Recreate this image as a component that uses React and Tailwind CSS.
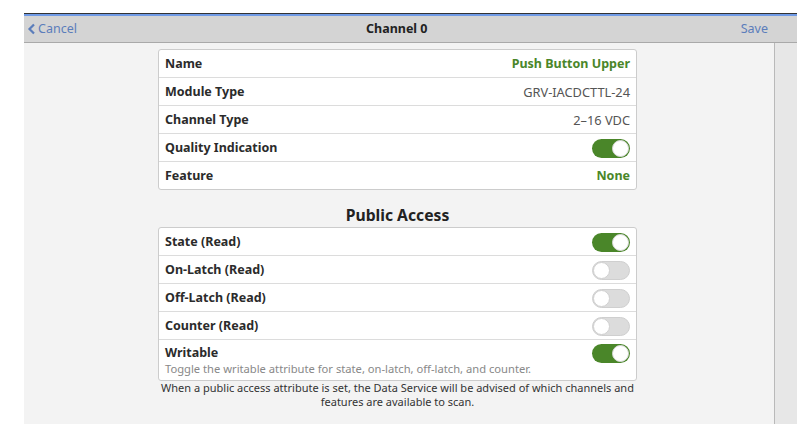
import React from "react";

const font = { fontFamily: '"Noto Sans", "Open Sans", sans-serif' };

function Toggle({ on }) {
  return on ? (
    <div className="w-[38px] h-[19px] rounded-full bg-[#4a8629] flex items-center justify-end pr-[1px]">
      <div className="w-[17px] h-[17px] rounded-full bg-white border border-[#d8d8d8]" />
    </div>
  ) : (
    <div className="w-[38px] h-[19px] rounded-full bg-[#dcdcdc] border border-[#cfcfcf] flex items-center">
      <div className="w-[17px] h-[17px] rounded-full bg-white border border-[#d0d0d0]" />
    </div>
  );
}

function Row({ label, children, last }) {
  return (
    <div className={"flex items-center justify-between px-[6px] pt-[2px] " + (last ? "h-[27px]" : "h-[28px] border-b border-[#dcdcdc]")}>
      <span className="text-[12.5px] font-bold text-[#2b2b2b]">{label}</span>
      {children}
    </div>
  );
}

export default function App() {
  return (
    <div className="w-[812px] h-[438px] bg-white overflow-hidden" style={font}>
      <div className="ml-[24px] mt-[13px] w-[773px] border-t border-[#333333]">
        <div className="h-[2px] bg-[#6f9ae6]" />
        <div className="h-[27px] bg-[#d4d4d4] border-b border-[#a9a9a9] flex items-center pl-[3px] pr-[29px]">
          <div className="w-[339px] flex items-center text-[#5b7dbb] text-[12.5px] gap-[2px]">
            <svg width="9" height="12" viewBox="0 0 9 12">
              <path d="M7 1.5 L2.5 6 L7 10.5" fill="none" stroke="#5b7dbb" strokeWidth="2.2" />
            </svg>
            <span>Cancel</span>
          </div>
          <span className="text-[12.5px] font-bold text-[#222]">Channel 0</span>
          <div className="flex-1" />
          <span className="text-[#5b7dbb] text-[12.5px]">Save</span>
        </div>
        <div className="flex h-[381px]">
          <div className="flex-1 bg-[#f3f3f3] pt-[6px]">
            <div className="w-[479px] ml-[134px]">
              <div className="bg-white border border-[#cccccc] rounded-[3px]">
                <Row label="Name">
                  <span className="text-[12.5px] font-bold text-[#4a8629]">Push Button Upper</span>
                </Row>
                <Row label="Module Type">
                  <span className="text-[12.8px] text-[#555]">GRV-IACDCTTL-24</span>
                </Row>
                <Row label="Channel Type">
                  <span className="text-[12.8px] text-[#555]">2–16 VDC</span>
                </Row>
                <Row label="Quality Indication">
                  <Toggle on />
                </Row>
                <Row label="Feature" last>
                  <span className="text-[12.5px] font-bold text-[#4a8629]">None</span>
                </Row>
              </div>
              <div className="pt-[15px] h-[37px] text-center text-[15.7px] leading-[20px] font-bold text-[#222]">
                Public Access
              </div>
              <div className="bg-white border border-[#cccccc] rounded-[3px]">
                <Row label="State (Read)">
                  <Toggle on />
                </Row>
                <Row label="On-Latch (Read)">
                  <Toggle />
                </Row>
                <Row label="Off-Latch (Read)">
                  <Toggle />
                </Row>
                <Row label="Counter (Read)">
                  <Toggle />
                </Row>
                <div className="h-[40px] flex justify-between px-[6px] pt-[4px]">
                  <div className="flex flex-col">
                    <span className="text-[12.5px] font-bold text-[#2b2b2b] leading-[18px]">Writable</span>
                    <span className="text-[11.2px] text-[#888] leading-[14px]">
                      Toggle the writable attribute for state, on-latch, off-latch, and counter.
                    </span>
                  </div>
                  <Toggle on />
                </div>
              </div>
              <div className="text-center text-[11px] leading-[14px] text-[#333] -mx-[4px]">
                When a public access attribute is set, the Data Service will be advised of which channels and
                <br />
                features are available to scan.
              </div>
            </div>
          </div>
          <div className="w-[23px] bg-[#e7e7e7] border-l border-[#b9b9b9]" />
        </div>
      </div>
    </div>
  );
}
